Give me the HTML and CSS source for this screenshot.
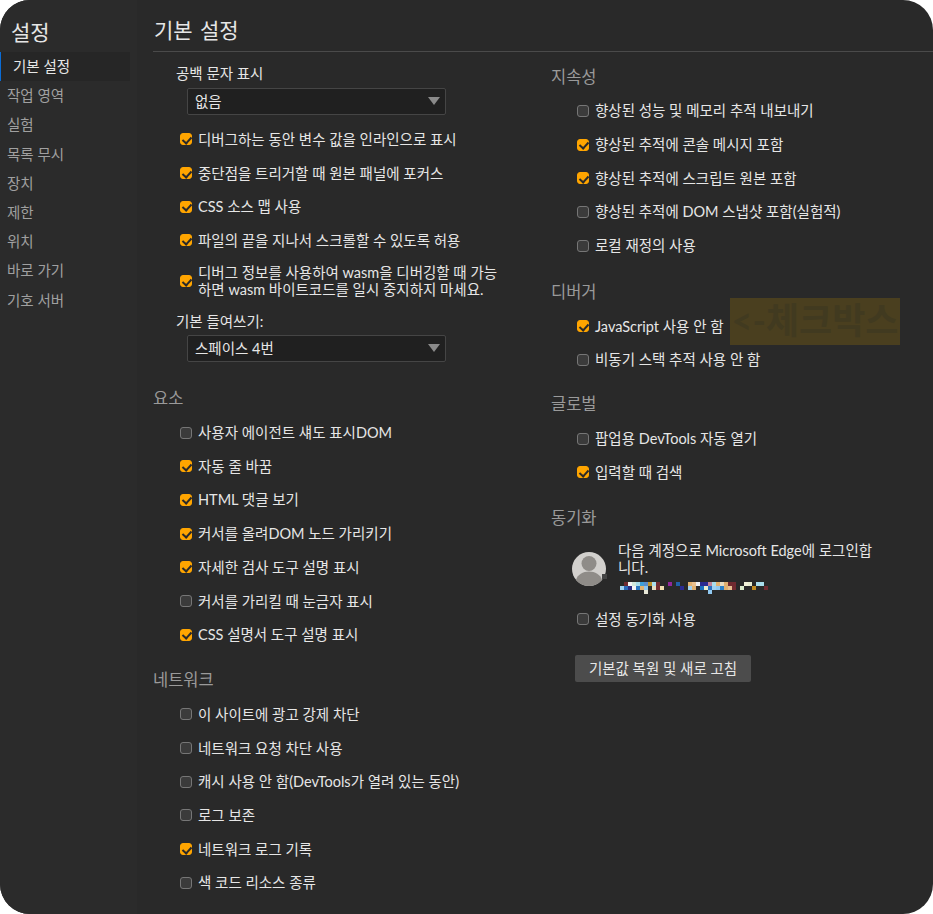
FILE: index.html
```html
<!DOCTYPE html>
<html lang="ko">
<head>
<meta charset="utf-8">
<title>설정</title>
<link rel="stylesheet" href="styles.css">
</head>
<body>
<div class="window">
  <aside class="sidebar">
    <h1 class="side-title">설정</h1>
    <nav class="side-nav">
      <a class="side-item active">기본 설정</a>
      <a class="side-item">작업 영역</a>
      <a class="side-item">실험</a>
      <a class="side-item">목록 무시</a>
      <a class="side-item">장치</a>
      <a class="side-item">제한</a>
      <a class="side-item">위치</a>
      <a class="side-item">바로 가기</a>
      <a class="side-item">기호 서버</a>
    </nav>
  </aside>
  <main class="main">
    <h2 class="page-title">기본 설정</h2>
    <div class="columns">
      <div class="col col-left">
        <div class="field-label">공백 문자 표시</div>
        <div class="select"><span>없음</span><i class="caret"></i></div>
        <div class="group first">
          <label class="row"><i class="cb on"></i><span>디버그하는 동안 변수 값을 인라인으로 표시</span></label>
          <label class="row"><i class="cb on"></i><span>중단점을 트리거할 때 원본 패널에 포커스</span></label>
          <label class="row"><i class="cb on"></i><span>CSS 소스 맵 사용</span></label>
          <label class="row"><i class="cb on"></i><span>파일의 끝을 지나서 스크롤할 수 있도록 허용</span></label>
          <label class="row two"><i class="cb on"></i><span>디버그 정보를 사용하여 wasm을 디버깅할 때 가능<br>하면 wasm 바이트코드를 일시 중지하지 마세요.</span></label>
        </div>
        <div class="field-label second">기본 들여쓰기:</div>
        <div class="select tight"><span>스페이스 4번</span><i class="caret"></i></div>
        <h3 class="section sec-elements">요소</h3>
        <div class="group">
          <label class="row"><i class="cb"></i><span>사용자 에이전트 섀도 표시DOM</span></label>
          <label class="row"><i class="cb on"></i><span>자동 줄 바꿈</span></label>
          <label class="row"><i class="cb on"></i><span>HTML 댓글 보기</span></label>
          <label class="row"><i class="cb on"></i><span>커서를 올려DOM 노드 가리키기</span></label>
          <label class="row"><i class="cb on"></i><span>자세한 검사 도구 설명 표시</span></label>
          <label class="row"><i class="cb"></i><span>커서를 가리킬 때 눈금자 표시</span></label>
          <label class="row"><i class="cb on"></i><span>CSS 설명서 도구 설명 표시</span></label>
        </div>
        <h3 class="section">네트워크</h3>
        <div class="group">
          <label class="row"><i class="cb"></i><span>이 사이트에 광고 강제 차단</span></label>
          <label class="row"><i class="cb"></i><span>네트워크 요청 차단 사용</span></label>
          <label class="row"><i class="cb"></i><span>캐시 사용 안 함(DevTools가 열려 있는 동안)</span></label>
          <label class="row"><i class="cb"></i><span>로그 보존</span></label>
          <label class="row"><i class="cb on"></i><span>네트워크 로그 기록</span></label>
          <label class="row"><i class="cb"></i><span>색 코드 리소스 종류</span></label>
        </div>
      </div>
      <div class="col col-right">
        <h3 class="section top">지속성</h3>
        <div class="group">
          <label class="row"><i class="cb"></i><span>향상된 성능 및 메모리 추적 내보내기</span></label>
          <label class="row"><i class="cb on"></i><span>향상된 추적에 콘솔 메시지 포함</span></label>
          <label class="row"><i class="cb on"></i><span>향상된 추적에 스크립트 원본 포함</span></label>
          <label class="row"><i class="cb"></i><span>향상된 추적에 DOM 스냅샷 포함(실험적)</span></label>
          <label class="row"><i class="cb"></i><span>로컬 재정의 사용</span></label>
        </div>
        <h3 class="section sec-debug">디버거</h3>
        <div class="group">
          <label class="row"><i class="cb on"></i><span>JavaScript 사용 안 함</span><b class="note">&lt;-체크박스</b></label>
          <label class="row"><i class="cb"></i><span>비동기 스택 추적 사용 안 함</span></label>
        </div>
        <h3 class="section sec-global">글로벌</h3>
        <div class="group">
          <label class="row"><i class="cb"></i><span>팝업용 DevTools 자동 열기</span></label>
          <label class="row"><i class="cb on"></i><span>입력할 때 검색</span></label>
        </div>
        <h3 class="section sec-sync">동기화</h3>
        <div class="account">
          <svg class="avatar" viewBox="0 0 36 36" width="36" height="36" aria-hidden="true">
            <circle cx="18" cy="18" r="17" fill="#d2d0cd"/>
            <circle cx="18" cy="12.500" r="7.500" fill="#8f8c88"/>
            <path d="M5 29c1.500-5.500 7-8.500 13-8.500s11.500 3 13 8.500a17 17 0 0 1-26 0z" fill="#8f8c88"/>
            <rect x="31" y="23" width="5" height="5" fill="#444"/>
          </svg>
          <div class="account-text">
            <div>다음 계정으로 Microsoft Edge에 로그인합<br>니다.</div>
            <svg class="redacted" width="148" height="12" viewBox="0 0 148 12" aria-hidden="true">
              <rect x="4" y="0" width="4" height="4" fill="#702a30"/><rect x="8" y="0" width="4" height="4" fill="#f4f4f4"/><rect x="12" y="0" width="4" height="4" fill="#cfe8dc"/><rect x="16" y="0" width="4" height="4" fill="#a8dce8"/><rect x="20" y="0" width="4" height="4" fill="#3f9fd8"/><rect x="24" y="0" width="4" height="4" fill="#5b8bc8"/><rect x="28" y="0" width="4" height="4" fill="#c0922a"/><rect x="32" y="0" width="4" height="4" fill="#a8dcec"/><rect x="36" y="0" width="4" height="4" fill="#702a30"/>
              <rect x="48" y="0" width="4" height="4" fill="#90289c"/><rect x="56" y="0" width="4" height="4" fill="#2060a8"/>
              <rect x="68" y="0" width="4" height="4" fill="#e0b070"/><rect x="72" y="0" width="4" height="4" fill="#e8c090"/><rect x="76" y="0" width="4" height="4" fill="#f0f0f0"/><rect x="80" y="0" width="8" height="4" fill="#2a2a90"/><rect x="88" y="0" width="4" height="4" fill="#c08098"/><rect x="92" y="0" width="4" height="4" fill="#a8dcec"/><rect x="96" y="0" width="4" height="4" fill="#e0b070"/><rect x="100" y="0" width="4" height="4" fill="#e8dcc0"/><rect x="104" y="0" width="4" height="4" fill="#e0b070"/><rect x="108" y="0" width="8" height="4" fill="#702a30"/>
              <rect x="124" y="0" width="4" height="4" fill="#f0f0d8"/><rect x="128" y="0" width="4" height="4" fill="#e8ecd0"/><rect x="136" y="0" width="8" height="4" fill="#a8dcec"/>
              <rect x="0" y="4" width="4" height="4" fill="#a0d0f0"/><rect x="4" y="4" width="4" height="4" fill="#2a68b8"/><rect x="8" y="4" width="4" height="4" fill="#2a2a80"/><rect x="12" y="4" width="4" height="4" fill="#f4f4f4"/><rect x="16" y="4" width="4" height="4" fill="#2a78c0"/><rect x="20" y="4" width="4" height="4" fill="#e0b070"/><rect x="24" y="4" width="4" height="4" fill="#90c8f0"/><rect x="32" y="4" width="4" height="4" fill="#e8dcc0"/><rect x="36" y="4" width="4" height="4" fill="#702a30"/><rect x="40" y="4" width="4" height="4" fill="#f0e0b0"/>
              <rect x="60" y="4" width="4" height="4" fill="#2a2a90"/>
              <rect x="68" y="4" width="4" height="4" fill="#a0d0f0"/><rect x="72" y="4" width="4" height="4" fill="#e0b070"/><rect x="80" y="4" width="4" height="4" fill="#1a70c0"/><rect x="84" y="4" width="4" height="4" fill="#e8ecd0"/><rect x="88" y="4" width="4" height="4" fill="#2a70c0"/><rect x="92" y="4" width="4" height="4" fill="#a0d0f0"/><rect x="96" y="4" width="4" height="4" fill="#90c8f0"/><rect x="100" y="4" width="4" height="4" fill="#2a80c8"/><rect x="104" y="4" width="4" height="4" fill="#e0b070"/><rect x="108" y="4" width="4" height="4" fill="#e8c090"/><rect x="112" y="4" width="4" height="4" fill="#702a30"/>
              <rect x="120" y="4" width="4" height="4" fill="#dceccc"/><rect x="132" y="4" width="4" height="4" fill="#c08a20"/><rect x="144" y="4" width="4" height="4" fill="#702a30"/>
              <rect x="24" y="8" width="4" height="4" fill="#e8e8d8"/><rect x="88" y="8" width="4" height="4" fill="#90c8f0"/>
            </svg>
          </div>
        </div>
        <div class="group sync">
          <label class="row"><i class="cb"></i><span>설정 동기화 사용</span></label>
        </div>
        <button class="reset">기본값 복원 및 새로 고침</button>
      </div>
    </div>
  </main>
</div>
</body>
</html>
```
FILE: styles.css
```css
* { box-sizing: border-box; }
html, body { margin: 0; padding: 0; background: #fff; }
body {
  width: 933px;
  height: 914px;
  overflow: hidden;
  font-family: Lato, "Noto Sans CJK KR", sans-serif;
  font-size: 14.5px;
  color: #e6e6e6;
}
.window {
  display: flex;
  width: 933px;
  height: 914px;
  border-radius: 30px;
  overflow: hidden;
  background: #292929;
}
.sidebar { width: 137px; flex: none; background: #2b2b2b; }
.side-title {
  margin: 0;
  padding: 19px 0 0 11px;
  height: 52px;
  font-size: 21px;
  line-height: 25px;
  font-weight: 400;
  color: #e6e6e6;
}
.side-nav { display: flex; flex-direction: column; }
.side-item {
  display: block;
  height: 29.2px;
  line-height: 29px;
  padding-left: 7px;
  color: #a0a0a0;
}
.side-item.active {
  margin-right: 7px;
  padding-left: 13px;
  color: #e6e6e6;
  background: #262626;
  box-shadow: inset 1px 0 0 #0a6cd6;
}
.main { flex: 1; min-width: 0; padding-left: 16px; }
.page-title {
  margin: 0;
  height: 52px;
  padding-top: 17px;
  text-indent: 1px;
  word-spacing: 2px;
  font-size: 21px;
  line-height: 25px;
  font-weight: 400;
  color: #e6e6e6;
  border-bottom: 1px solid #4a4a4a;
}
.columns { display: flex; }
.col-left { width: 398px; flex: none; }
.col-right { flex: 1; min-width: 0; }
.field-label { margin: 12px 0 0 23px; line-height: 20px; height: 20px; }
.field-label.second { margin-top: 7px; }
.select {
  display: flex;
  align-items: center;
  justify-content: space-between;
  width: 259px;
  height: 27px;
  margin: 4px 0 0 34px;
  padding: 0 5px 2px 7px;
  background: #202020;
  border: 1px solid #454545;
  border-radius: 2px;
}
.select.tight { margin-top: 3px; }
.caret {
  width: 0; height: 0;
  border-left: 6.500px solid transparent;
  border-right: 6.500px solid transparent;
  border-top: 8px solid #8a8a8a;
}
.group { display: flex; flex-direction: column; padding-left: 27px; }
.col-right .group { padding-left: 26px; }
.group.first { margin-top: 7.500px; }
.row {
  display: flex;
  align-items: center;
  height: 33.7px;
  line-height: 17px;
  position: relative;
}
.row.two { height: 48px; }
.cb {
  flex: none;
  width: 12px;
  height: 12px;
  margin-right: 6px;
  border: 1px solid #767676;
  border-radius: 3px;
  background: #3b3b3b;
  position: relative;
}
.cb.on { background: #ffa500; border-color: #ffa500; }
.cb.on::after {
  content: "";
  position: absolute;
  left: 3px;
  top: 0.500px;
  width: 4px;
  height: 7px;
  border: solid #2a2a2a;
  border-width: 0 2px 2px 0;
  transform: rotate(42deg);
}
.section {
  height: 24px;
  line-height: 24px;
  font-size: 16.500px;
  font-weight: 400;
  color: #9a9a9a;
  margin: 16px 0 6px;
}
.section.sec-elements { margin-top: 23.500px; }
.section.top { margin-top: 13px; margin-bottom: 5px; }
.section.sec-debug { margin-top: 18px; margin-bottom: 5px; }
.section.sec-global { margin-top: 15px; }
.section.sec-sync { margin-top: 17px; }
.note {
  position: absolute;
  left: 153px;
  top: -11px;
  width: 170px;
  height: 47px;
  background: #4a3f1f;
  color: #413a20;
  font-size: 36px;
  line-height: 44px;
  font-weight: 700;
  white-space: nowrap;
  text-align: center;
  overflow: hidden;
}
.account { display: flex; align-items: center; padding: 0 0 0 20px; margin-top: 12px; }
.avatar { flex: none; margin-right: 11px; }
.account-text { line-height: 17px; width: 270px; }
.redacted { display: block; margin: 6px 0 2px 2px; }
.group.sync { margin-top: 6px; }
.reset {
  display: block;
  margin: 19px 0 0 24px;
  width: 176px;
  height: 27px;
  border: 0;
  border-radius: 2px;
  background: #4c4c4c;
  color: #e6e6e6;
  font: inherit;
  line-height: 27px;
  padding: 0;
}
```
